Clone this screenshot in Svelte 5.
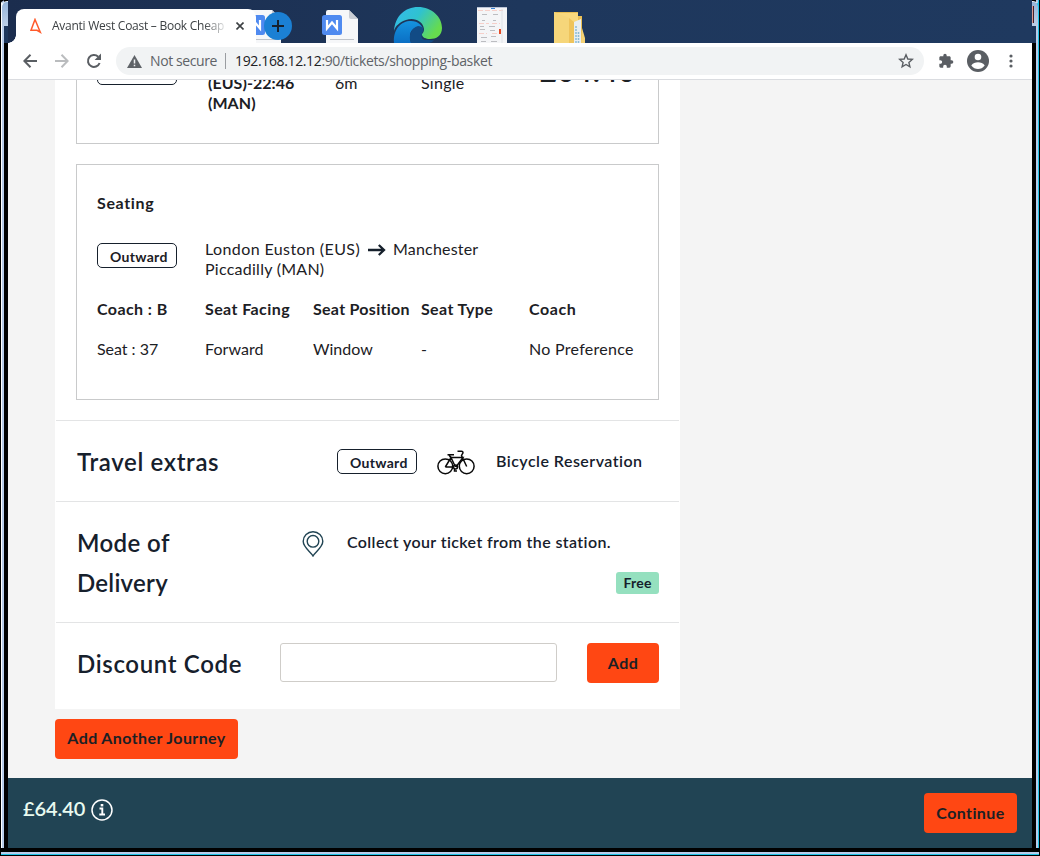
<script>
  const seats = [
    { head: 'Coach : B', hs: 0.42, value: 'Seat : 37', vs: -0.03 },
    { head: 'Seat Facing', hs: 0.41, value: 'Forward', vs: 0.05 },
    { head: 'Seat Position', hs: 0.28, value: 'Window', vs: 0 },
    { head: 'Seat Type', hs: 0.36, value: '-', vs: 0 },
    { head: 'Coach', hs: 0.6, value: 'No Preference', vs: 0.28 }
  ];
</script>

{#snippet docIcon()}
  <svg width="40" height="34" viewBox="0 0 40 34">
    <path d="M4 2Q4 0 6 0H27L36 9V34H4Z" fill="#f6f7f9" />
    <path d="M27 0 36 9H29Q27 9 27 7Z" fill="#c9cdd4" />
    <path d="M8 29.5H32" stroke="#bfc3ca" />
    <rect x="0" y="5" width="20" height="20" rx="2.5" fill="#4f8af0" />
    <path d="M5 10V18.500L10 12.500 15 18.500V10" fill="none" stroke="#fff" stroke-width="2.200" />
  </svg>
{/snippet}

<div class="frame">
  <div class="edge left"><i class="glass"></i><i class="sky"></i></div>
  <div class="window">
    <header class="tabs">
      <div class="desk first">{@render docIcon()}</div>
      <div class="desk word">{@render docIcon()}</div>
      <div class="desk edgeicon">
        <svg width="50" height="36" viewBox="0 0 50 36">
          <defs>
            <linearGradient id="ga" x1="0" y1="0" x2="1" y2=".5"><stop offset="0" stop-color="#35b9ee" /><stop offset=".5" stop-color="#2fc2d0" /><stop offset="1" stop-color="#66db4e" /></linearGradient>
            <linearGradient id="gb" x1="0" y1="0" x2="0" y2="1"><stop offset="0" stop-color="#1593df" /><stop offset="1" stop-color="#0b6fc4" /></linearGradient>
          </defs>
          <path d="M1 24C2 9 12 0 25 0C39 0 49 10 49 21C49 29 43 32 37 32C32 32 29 30 29 28C29 26 31 26 31 22C30 14 21 10 13 13C7 15 2 19 1 24Z" fill="url(#ga)" />
          <path d="M1 36C0 22 8 14 18 14C25 14 30 19 30 23C25 17 17 22 17 29Q17 33 18 36Z" fill="url(#gb)" />
          <path d="M18 36C15 29 18 21 25 19C30 19 32 23 29 26C28 31 34 34 41 33Q39 36 36 36Z" fill="#124b85" />
          <path d="M29 27C28 30 31 32 37 32C31 35 27 31 29 27Z" fill="#1f3558" />
        </svg>
      </div>
      <div class="desk shot">
        <svg width="30" height="36" viewBox="0 0 30 36">
          <rect width="30" height="36" fill="#f4f5f7" />
          <path d="M0 .5H30" stroke="#b9c4d6" /><path d="M14 1.5H18" stroke="#3b86d8" />
          <path d="M1 3.5H26M2 16.5H12M15 16.5H23M2 26.5H10M15 26.5H21" stroke="#f6cfc9" stroke-dasharray="5 2" />
          <path d="M5 7.5H10M16 7.5H21M5 13.5H8M16 13.5H19M3 19.5H7M12 19.5H18M3 22.5H8M13 23.5H18M4 30.5H10M14 29.5H19M4 34.5H9M14 34.5H20" stroke="#bcbdc1" />
          <path d="M22 24.5H24" stroke="#e44b26" stroke-width="5" />
          <path d="M25 2V36" stroke="#dfe2e7" />
        </svg>
      </div>
      <div class="desk folder">
        <svg width="32" height="32" viewBox="0 0 32 32">
          <path d="M0 0H24V4H28V32H0Z" fill="#e9bf55" />
          <path d="M1 1H24V32H1Z" fill="#f9d97d" />
          <path d="M20 10 27 7V32H20Z" fill="#e8eef2" />
          <path d="M22 14V32M24.5 20V32" stroke="#8dbcd6" stroke-width="1.500" stroke-dasharray="2 1" />
          <path d="M0 0 15 6V32H0Z" fill="#f6d67a" /><path d="M15 6 20 10V32H15Z" fill="#efc45c" />
          <path d="M28 16 31 26V32H27Z" fill="#f5d275" />
        </svg>
      </div>
      <div class="newtab"><svg width="12" height="12"><path d="M6 0V12M0 6H12" stroke="#16212e" stroke-width="2" /></svg></div>
      <div class="tab">
        <svg class="fav" width="12" height="16" viewBox="0 0 12 16"><path d="M5 1.500 10.300 14.200 7 12.300 1 12.300Z" fill="none" stroke="#ff5a2b" stroke-width="1.500" /></svg>
        <span class="title">Avanti West Coast – Book Cheap</span>
        <svg class="close" width="8" height="8"><path d="M.5 .5 7.5 7.5M7.5 .5 .5 7.5" stroke="#3c4043" stroke-width="1.6" /></svg>
      </div>
    </header>

    <nav class="toolbar">
      <svg class="back" width="14" height="14" viewBox="0 0 14 14"><path d="M14 7H1.5M7.5 .8 1.3 7 7.5 13.2" fill="none" stroke="#5a5e63" stroke-width="2" /></svg>
      <svg class="fwd" width="14" height="14" viewBox="0 0 14 14"><path d="M0 7H12.5M6.5 .8 12.7 7 6.5 13.2" fill="none" stroke="#babcbe" stroke-width="2" /></svg>
      <svg class="reload" width="16" height="16" viewBox="0 0 16 16"><path d="M13.6 10A6 6 0 1 1 12.2 3.7" fill="none" stroke="#5a5e63" stroke-width="2" /><path d="M15 0.5V7H8.6Z" fill="#5a5e63" /></svg>
      <div class="url">
        <svg width="15" height="13" viewBox="0 0 15 13"><path d="M7.5 0 15 13H0Z" fill="#5f6368" /><path d="M7.5 4.5V8.5M7.5 9.7V11.2" stroke="#f1f3f4" stroke-width="1.5" /></svg>
        <span class="ns">Not secure</span><i></i>
        <span class="addr"><b>192.168.12.12</b>:90/tickets/shopping-basket</span>
        <svg class="star" width="16" height="16" viewBox="0 0 16 16"><path d="M8 1.8 9.8 6 14.3 6.4 10.9 9.4 11.9 13.8 8 11.5 4.1 13.8 5.1 9.4 1.7 6.4 6.2 6Z" fill="none" stroke="#5a5e63" stroke-width="1.4" /></svg>
      </div>
      <svg class="puzzle" width="16" height="16" viewBox="0 0 24 24"><path d="M20.5 11H19V7c0-1.1-.9-2-2-2h-4V3.500a2.500 2.500 0 0 0-5 0V5H4c-1.100 0-2 .9-2 2v3.800h1.500c1.500 0 2.700 1.200 2.700 2.700S5 16.200 3.500 16.200H2V20c0 1.100.9 2 2 2h3.800v-1.500c0-1.500 1.200-2.700 2.700-2.700s2.700 1.200 2.700 2.700V22H17c1.100 0 2-.9 2-2v-4h1.500a2.500 2.500 0 0 0 0-5z" fill="#5a5e63" /></svg>
      <svg class="user" width="22" height="22" viewBox="0 0 22 22"><circle cx="11" cy="11" r="11" fill="#5a5e63" /><circle cx="11" cy="7" r="3.300" fill="#fff" /><path d="M4.300 15.500C5.500 13 8.500 12.300 11 12.300S16.500 13 17.700 15.500C16 18 13.500 19 11 19S6 18 4.300 15.500Z" fill="#fff" /></svg>
      <svg class="dots" width="4" height="14"><circle cx="2" cy="2" r="1.600" fill="#5a5e63" /><circle cx="2" cy="7" r="1.600" fill="#5a5e63" /><circle cx="2" cy="12" r="1.600" fill="#5a5e63" /></svg>
    </nav>

    <main>
      <div class="card">
        <section class="box journey">
          <span class="badge">Outward</span>
          <strong class="times">(EUS)-22:46<br />(MAN)</strong>
          <span class="dur">6m</span>
          <span class="kind">Single</span>
          <strong class="price">£64.40</strong>
        </section>

        <section class="box seating">
          <h3>Seating</h3>
          <div class="route">
            <span class="badge">Outward</span>
            <p><span class="from">London Euston (EUS)</span><svg width="18" height="12" viewBox="0 0 18 12"><path d="M0 6H15.500M10.800 1 16 6 10.800 11" fill="none" stroke="#16202c" stroke-width="2.300" /></svg><span class="city">Manchester</span><br /><span class="pic">Piccadilly (MAN)</span></p>
          </div>
          <div class="grid">
            {#each seats as s}
              <div><strong style:letter-spacing="{s.hs}px">{s.head}</strong><span style:letter-spacing="{s.vs}px">{s.value}</span></div>
            {/each}
          </div>
        </section>

        <section class="row extras">
          <h2>Travel extras</h2>
          <span class="badge">Outward</span>
          <svg class="bike" width="38" height="25" viewBox="0 0 38 25" fill="none" stroke="#0a0a0a" stroke-width="1.500">
            <circle cx="8.300" cy="16.300" r="7.400" /><circle cx="29.700" cy="16.300" r="7.400" />
            <path d="M8.300 17 14 7.500 18.500 17M8.300 17H16M19 17 26 7.500H14M12 4.800 14 8M10.500 4.700H17M20.500 1.200H24.500Q26 1.200 26 2.800L24.500 5.500 29.700 16.500" />
            <circle cx="18.500" cy="17" r="2" /><path d="M17.500 19V21H20" />
          </svg>
          <strong class="bicycle">Bicycle Reservation</strong>
        </section>

        <section class="row delivery">
          <h2><span class="mode">Mode of</span><br /><span class="del">Delivery</span></h2>
          <svg class="pin" width="22" height="26" viewBox="0 0 22 26" fill="none" stroke="#214453" stroke-width="1.400"><path d="M11 25C9 21 1.200 16.500 1.200 10.300A9.800 9.500 0 0 1 20.800 10.300C20.800 16.500 13 21 11 25Z" /><circle cx="11" cy="10.300" r="5.800" /></svg>
          <div class="method"><strong>Collect your ticket from the station.</strong><span class="free">Free</span></div>
        </section>

        <section class="row discount">
          <h2>Discount Code</h2>
          <input aria-label="Discount Code" />
          <button class="add">Add</button>
        </section>
      </div>
      <button class="another">Add Another Journey</button>
    </main>

    <footer>
      <span class="total">£64.40</span>
      <svg width="22" height="22" viewBox="0 0 22 22"><circle cx="11" cy="11" r="10" fill="none" stroke="#fff" stroke-width="1.500" /><path d="M8.500 9.500H11.300V15.500M8.300 15.500H14" fill="none" stroke="#fff" stroke-width="1.900" /><rect x="9.700" y="5" width="2.600" height="2.400" fill="#fff" /></svg>
      <button class="continue">Continue</button>
    </footer>
  </div>
  <div class="edge right"><i class="glass"><i class="red"></i></i><i class="sky"></i></div>
  <div class="bottom"></div>
</div>

<style>
  :global(body) { background: #000; overflow: hidden; }
  * { box-sizing: border-box; }
  .frame { width: 1040px; height: 856px; display: grid; grid-template: 848px 8px / 8px 1024px 8px; font: 16px/20px Lato, sans-serif; color: #1c2024; overflow: hidden; }
  .edge { display: flex; flex-direction: column; }
  .left { background: linear-gradient(90deg, #000 0 1px, #fff 1px 2px, #b9cdea 2px 4px, #000 4px); border-radius: 6px 0 0; }
  .right { background: linear-gradient(90deg, #000 0 4px, #b9cdea 4px 6px, #1fc3e8 6px 7px, #000 7px); }
  .glass { height: 25px; margin-top: 1px; background: linear-gradient(#96b4d8, #bccfe8); border-top: 1px solid #e4edf7; }
  .left .glass { margin-left: 1px; border-left: 1px solid #fff; border-radius: 6px 0 0; }
  .right .glass { margin-right: 1px; border-right: 1px solid #1fc3e8; border-radius: 0 6px 0 0; }
  .red { display: block; width: 2px; height: 17px; margin-top: 4px; background: #d79b93; border-right: 1px solid #47202a; }
  .sky { height: 17px; background: #1e375c; }
  .left .sky { margin-left: 4px; }
  .right .sky { margin-right: 4px; }
  .bottom { grid-column: 1 / -1; background: linear-gradient(#000 0 4px, #b9cdea 4px 6px, #1fc3e8 6px 7px, #000 7px); border-left: 1px solid #000; border-right: 1px solid #000; }
  .window { display: grid; grid-template-rows: 43px 37px 698px 70px; min-width: 0; }

  .tabs { position: relative; overflow: hidden; padding: 9px 0 0 8px; background: linear-gradient(90deg, #1b2d4e, #1e375c 50%, #1f395f); }
  .tab { position: relative; display: flex; align-items: center; width: 240px; height: 34px; padding-left: 14px; background: #fff; border-radius: 8px 8px 0 0; }
  .tab::before { content: ''; position: absolute; left: -8px; bottom: 0; width: 8px; height: 8px; background: radial-gradient(circle at 0 0, transparent 7.5px, #fff 8px); }
  .title { margin-left: 10px; width: 173px; font: 12px/18px "Open Sans", sans-serif; letter-spacing: -.26px; color: #3c4043; white-space: nowrap; -webkit-mask-image: linear-gradient(90deg, #000 152px, transparent 176px); mask-image: linear-gradient(90deg, #000 152px, transparent 176px); }
  .close { margin-left: 11px; }
  .desk { position: absolute; }
  .desk svg { display: block; }
  .first { left: 237px; top: 10px; }
  .word { left: 314px; top: 10px; }
  .edgeicon { left: 385px; top: 7px; }
  .shot { left: 469px; top: 7px; }
  .folder { left: 546px; top: 12px; }
  .newtab { position: absolute; left: 256px; top: 12px; width: 28px; height: 28px; border-radius: 50%; background: #1b80d4; display: grid; place-items: center; }

  .toolbar { display: flex; align-items: center; background: #fff; border-bottom: 1px solid #dadce0; padding-left: 15px; }
  .fwd { margin-left: 18px; }
  .reload { margin-left: 17px; }
  .url { display: flex; align-items: center; width: 808px; height: 28px; margin-left: 14px; padding: 0 10px 0 11px; border-radius: 14px; background: #f1f3f4; font: 14px/20px "Open Sans", sans-serif; color: #5f6368; }
  .ns { margin-left: 8px; letter-spacing: -.4px; width: 67px; white-space: nowrap; }
  .url i { width: 1px; height: 16px; background: #9a9da1; margin: 0 9px 0 8px; }
  .addr { letter-spacing: -.36px; }
  .addr b { font-weight: 400; color: #202124; }
  .star { margin-left: auto; }
  .puzzle { margin-left: 14px; }
  .user { margin-left: 13px; }
  .dots { margin-left: 20px; }

  main { background: #f4f4f4; overflow: hidden; padding-left: 47px; }
  .card { width: 625px; height: 629px; background: #fff; }
  .box { margin: 0 21px; border: 1px solid #c9cacb; padding: 0 20px; }
  .journey { display: grid; grid-template-columns: 111px 127px 86px 119px 1fr; align-items: start; height: 64px; border-top: 0; overflow: hidden; }
  .journey > * { margin-top: -7px; }
  .journey .badge { margin-top: -20px; }
  .times { font-weight: 700; letter-spacing: .05px; }
  .kind { letter-spacing: .25px; }
  .journey .price { font-size: 28px; line-height: 34px; letter-spacing: 1.4px; margin-top: -26px; }
  .badge { display: block; width: 80px; height: 25px; border: 1px solid #16202c; border-radius: 5px; padding-left: 12px; font-size: 14px; line-height: 25px; font-weight: 700; letter-spacing: .3px; }
  .seating { margin-top: 20px; height: 236px; padding-top: 27px; }
  h2, h3, p { margin: 0; }
  h3 { font-size: 16px; line-height: 21px; font-weight: 700; letter-spacing: .65px; }
  .route { display: grid; grid-template-columns: 108px 1fr; margin-top: 26px; }
  .route .badge { margin-top: 4px; }
  .route svg { margin: 0 7px 0 8px; vertical-align: -1px; }
  .from { letter-spacing: .4px; }
  .city { letter-spacing: .18px; }
  .pic { letter-spacing: .26px; }
  .grid { display: grid; grid-template-columns: repeat(4, 108px) 1fr; margin-top: 20px; white-space: nowrap; }
  .grid div { display: grid; gap: 20px; }
  .row { display: flex; border-top: 1px solid #e3e4e5; margin: 0 1px; padding: 0 20px 0 21px; color: #16202c; }
  h2 { font-size: 24px; line-height: 42px; font-weight: 600; letter-spacing: .65px; white-space: nowrap; }
  .extras { margin-top: 20px; height: 81px; align-items: center; }
  .extras h2 { width: 260px; padding-top: 1px; }
  .bike { margin: 3px 21px 0 20px; }
  .bicycle { font-weight: 600; letter-spacing: .47px; }
  .delivery { height: 121px; padding-top: 20px; }
  .delivery h2 { width: 225px; line-height: 40px; padding-top: 1px; }
  .mode { letter-spacing: .4px; }
  .del { letter-spacing: .25px; }
  .pin { margin-top: 9px; }
  .method { flex: 1; display: flex; flex-direction: column; align-items: flex-end; padding-top: 10px; }
  .method strong { width: 312px; font-weight: 600; letter-spacing: .38px; }
  .free { margin-top: 20px; width: 43px; height: 22px; border-radius: 3px; background: #95e0bf; text-align: center; font-size: 14px; line-height: 22px; font-weight: 700; letter-spacing: .22px; }
  .discount { padding-top: 20px; }
  .discount h2 { width: 203px; }
  input { width: 277px; height: 39px; border: 1px solid #cfcdc9; border-radius: 3px; background: #fff; padding: 0; }
  button { border: 0; border-radius: 4px; height: 40px; padding: 0; background: #ff4713; color: #1c2024; font: 700 16px/40px Lato, sans-serif; letter-spacing: .4px; }
  .add { width: 72px; margin-left: 30px; }
  .another { display: block; width: 183px; margin-top: 10px; line-height: 38px; padding-bottom: 2px; }
  footer { display: flex; background: #214454; padding: 15px; }
  .total { width: 68px; color: #e9fbf0; font-size: 20px; line-height: 30px; font-weight: 600; letter-spacing: -.1px; }
  footer svg { margin: 6px 0 0 -.5px; }
  .continue { width: 93px; margin-left: auto; }
</style>
